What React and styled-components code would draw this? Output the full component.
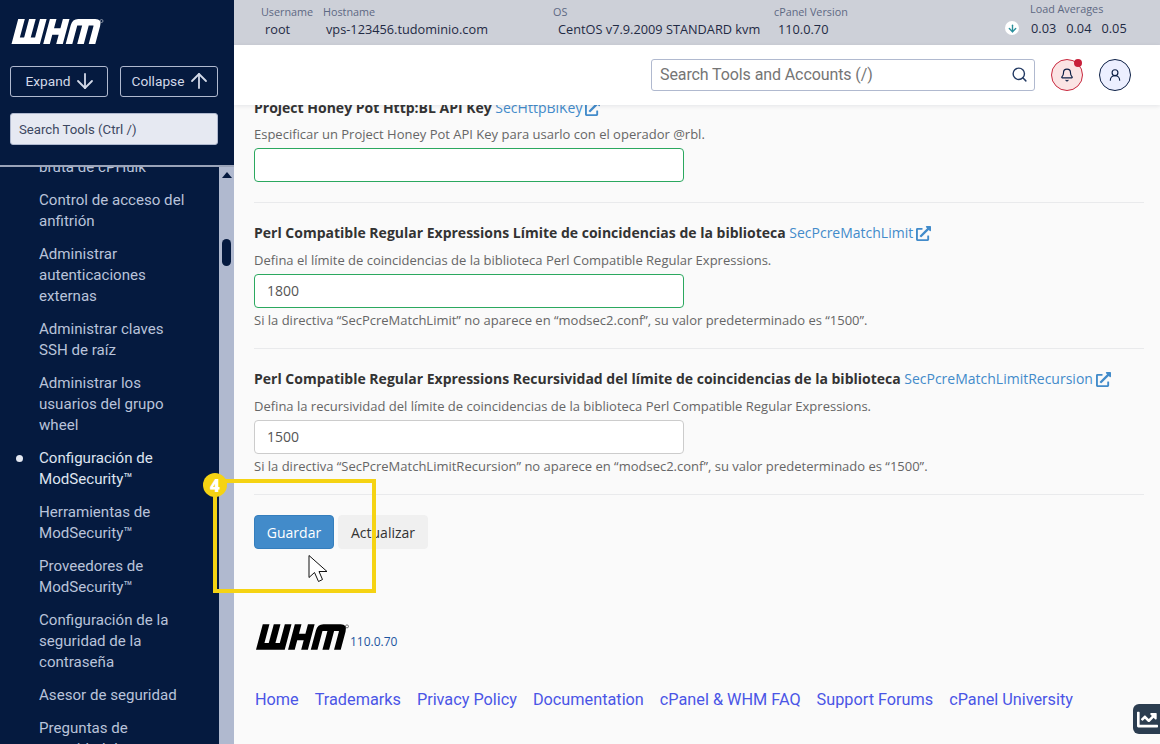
import React from "react";
import styled, { createGlobalStyle } from "styled-components";
import { ArrowDown, ArrowUp, Search, Bell, UserRound } from "lucide-react";
import { FaExternalLinkAlt, FaChartLine } from "react-icons/fa";

const Global = createGlobalStyle`
  html, body { margin: 0; padding: 0; height: 100%; background: #fafafa; }
  * { box-sizing: border-box; }
  body { font-family: "Open Sans", sans-serif; overflow: hidden; }
`;

const Page = styled.div`
  position: relative;
  display: flex;
  width: 1160px;
  height: 744px;
  overflow: hidden;
  background: #fafafa;
`;

const Sidebar = styled.aside`
  width: 234px;
  height: 744px;
  flex: none;
  display: flex;
  flex-direction: column;
  background: #051a3f;
`;

const SideHead = styled.div`
  height: 167px;
  flex: none;
  padding: 19px 16px 0 10px;
  border-bottom: 2px solid #9aa3b8;
`;

const LogoSvg = styled.svg`
  display: block;
  width: ${(p) => p.$w}px;
  height: ${(p) => p.$h}px;
  margin-left: ${(p) => p.$ml || 0}px;
  flex: none;
`;

const ButtonRow = styled.div`
  display: flex;
  gap: 12px;
  margin-top: 22px;
`;

const OutlineButton = styled.div`
  width: 98px;
  height: 31px;
  padding-bottom: 1px;
  display: flex;
  align-items: center;
  justify-content: center;
  gap: 3px;
  border: 1px solid #b0b9cf;
  border-radius: 3px;
  color: #d3d9e8;
  font-family: Roboto, sans-serif;
  font-size: 13.7px;
  & svg { margin-right: -5px; }
`;

const SideSearch = styled.div`
  height: 32px;
  margin-top: 16px;
  padding: 0 8px;
  display: flex;
  align-items: center;
  background: #e6e9f2;
  border: 1px solid #b0b9cf;
  border-radius: 3px;
  color: #3c4761;
  font-family: Roboto, sans-serif;
  font-size: 13.2px;
`;

const SideBody = styled.div`
  flex: 1;
  min-height: 0;
  display: flex;
`;

const NavList = styled.nav`
  width: 219px;
  flex: none;
  overflow: hidden;
  display: flex;
  flex-direction: column;
  gap: 12px;
`;

const NavRow = styled.div`
  display: flex;
  flex: none;
  margin-top: ${(p) => p.$mt || 0}px;
  padding-right: 30px;
  font-family: Roboto, sans-serif;
  font-size: 15.1px;
  line-height: 21px;
  color: ${(p) => (p.$active ? "#dfe4f0" : "#b9c3da")};
`;

const Marker = styled.span`
  width: 39px;
  height: 21px;
  flex: none;
  display: flex;
  align-items: center;
  padding-left: 16px;
  &::after {
    content: "";
    display: ${(p) => (p.$active ? "block" : "none")};
    width: 7px;
    height: 7px;
    border-radius: 50%;
    background: #e4e8f2;
  }
`;

const ScrollTrack = styled.div`
  width: 15px;
  flex: none;
  display: flex;
  flex-direction: column;
  align-items: center;
  background: #b0b9cf;
`;

const ScrollArrow = styled.span`
  width: 0;
  height: 0;
  margin-top: 5px;
  border-left: 5px solid transparent;
  border-right: 5px solid transparent;
  border-bottom: 6px solid #051a3f;
`;

const ScrollThumb = styled.span`
  width: 9px;
  height: 27px;
  margin-top: 61px;
  border-radius: 5px;
  background: #051a3f;
`;

const Main = styled.main`
  flex: 1;
  min-width: 0;
  display: flex;
  flex-direction: column;
`;

const TopBar = styled.div`
  height: 45px;
  flex: none;
  padding-left: 27px;
  display: grid;
  grid-template-columns: 62px 230px 221px 231px 1fr;
  background: #cdd0d8;
`;

const Info = styled.div`
  padding-top: 4px;
`;

const InfoLabel = styled.div`
  font-size: 10.8px;
  line-height: 15px;
  color: #5d6883;
`;

const InfoValue = styled.div`
  margin-top: 1px;
  padding-left: ${(p) => p.$pl}px;
  font-size: 12.75px;
  line-height: 18px;
  white-space: nowrap;
  color: #1f2a44;
`;

const LoadBox = styled.div`
  padding-top: 1px;
`;

const LoadLabel = styled(InfoLabel)`
  margin-left: 25px;
`;

const LoadValues = styled.div`
  margin-top: 3px;
  display: flex;
  align-items: center;
  gap: 10px;
  font-size: 12.75px;
  line-height: 18px;
  color: #1f2a44;
`;

const LoadIcon = styled.span`
  width: 14px;
  height: 14px;
  margin-right: 2px;
  display: flex;
  align-items: center;
  justify-content: center;
  border-radius: 50%;
  background: #fff;
  color: #2a8f9c;
`;

const Header = styled.header`
  position: relative;
  z-index: 2;
  height: 60px;
  flex: none;
  padding: 14px 29px 0 0;
  display: flex;
  justify-content: flex-end;
  gap: 16px;
  background: #fff;
  box-shadow: 0 1px 4px rgba(30, 40, 70, 0.1);
`;

const HeaderSearch = styled.div`
  width: 384px;
  height: 32px;
  padding: 0 6px 1px 8px;
  display: flex;
  align-items: center;
  justify-content: space-between;
  border: 1px solid #b0b9cf;
  border-radius: 3px;
  font-family: Roboto, sans-serif;
  font-size: 16px;
  letter-spacing: -0.1px;
  color: #757575;
  & svg { color: #233a63; }
`;

const RoundButton = styled.div`
  position: relative;
  width: 32px;
  height: 32px;
  display: flex;
  align-items: center;
  justify-content: center;
  border-radius: 50%;
  border: 1px solid ${(p) => p.$line};
  background: ${(p) => p.$bg};
  color: #0c1f45;
`;

const Dot = styled.span`
  position: absolute;
  top: -1px;
  right: 0;
  width: 8px;
  height: 8px;
  border-radius: 50%;
  background: #c8203a;
`;

const Content = styled.div`
  flex: 1;
  min-height: 0;
  overflow: hidden;
  padding: 0 16px 0 20px;
`;

const Form = styled.div`
  margin-top: -8px;
`;

const Section = styled.section`
  padding: ${(p) => p.$pt}px 0 ${(p) => p.$pb}px;
  border-bottom: 1px solid #e9eaec;
`;

const FieldTitle = styled.div`
  height: 20px;
  padding-top: ${(p) => (p.$first ? 2 : 0)}px;
  display: flex;
  align-items: center;
  gap: 3.5px;
  font-size: 14px;
  line-height: 20px;
  font-weight: 700;
  color: #333;
  white-space: nowrap;
`;

const DocLink = styled.span`
  display: inline-flex;
  align-items: center;
  gap: 3px;
  font-weight: 400;
  color: #428bca;
`;

const Description = styled.div`
  margin-top: 8px;
  font-size: 13px;
  line-height: 18px;
  color: #666;
`;

const TextField = styled.div`
  width: 430px;
  height: 34px;
  margin-top: 5px;
  padding: 0 12px 2px;
  display: flex;
  align-items: center;
  background: #fff;
  border: 1px solid ${(p) => (p.$ok ? "#2ba85f" : "#ccc")};
  border-radius: 4px;
  font-size: 14px;
  color: #555;
`;

const HelpText = styled.div`
  margin-top: 3px;
  font-size: 13px;
  line-height: 18px;
  color: #666;
`;

const Actions = styled.div`
  display: flex;
  gap: 4px;
  margin-top: 20px;
`;

const ActionButton = styled.div`
  height: 34px;
  width: ${(p) => p.$w}px;
  display: flex;
  align-items: center;
  justify-content: center;
  border-radius: 4px;
  font-size: 14px;
  border: 1px solid ${(p) => (p.$primary ? "#357ebd" : "#f0f0f0")};
  background: ${(p) => (p.$primary ? "#428bca" : "#f0f0f0")};
  color: ${(p) => (p.$primary ? "#fff" : "#333")};
`;

const FootBrand = styled.div`
  margin-top: 75px;
  padding-left: 2px;
  display: flex;
  align-items: flex-end;
  gap: 1px;
  height: 26px;
`;

const FootVersion = styled.span`
  font-size: 12px;
  line-height: 17px;
  color: #1c55a0;
`;

const FootLinks = styled.div`
  margin-top: 38px;
  padding-left: 1px;
  display: flex;
  gap: 16px;
  font-family: Roboto, sans-serif;
  font-size: 16.25px;
  line-height: 24px;
  color: #4a55e6;
  white-space: nowrap;
`;

const Callout = styled.div`
  position: absolute;
  left: 213px;
  top: 479px;
  width: 163px;
  height: 114px;
  border: 4px solid #f5d313;
  pointer-events: none;
`;

const CalloutBadge = styled.span`
  position: absolute;
  left: -14px;
  top: -10px;
  width: 24px;
  height: 24px;
  display: flex;
  align-items: center;
  justify-content: center;
  border-radius: 50%;
  background: #f5d313;
  color: #fff;
  font-family: "Open Sans", sans-serif;
  font-size: 17px;
  font-weight: 800;
`;

const Pointer = styled.svg`
  position: absolute;
  left: 307px;
  top: 554px;
  width: 22px;
  height: 30px;
`;

const ChartTab = styled.div`
  position: absolute;
  right: 0;
  top: 704px;
  width: 27px;
  height: 30px;
  padding-left: 4px;
  display: flex;
  align-items: center;
  background: #2b3d50;
  border-radius: 6px 0 0 6px;
  color: #fff;
`;

function WhmLogo({ color, w, h, ml }) {
  return (
    <LogoSvg $w={w} $h={h} $ml={ml} viewBox="0 0 92 25">
      <g transform="translate(6.7 0) skewX(-15)" fill="none" stroke={color} strokeWidth="6.6">
        <path d="M3.3 0V21.7H25.1V0" strokeLinejoin="miter" />
        <path d="M14.2 0V22" />
        <path d="M35 0V25M48 0V25M35 12.5H48" />
        <path d="M57.5 25V6Q57.5 3.3 60 3.3H77Q80.5 3.3 80.5 7V25M69 3.3V25" />
      </g>
      <circle cx="90" cy="2" r="1.5" fill="none" stroke={color} strokeWidth="0.6" opacity="0.8" />
    </LogoSvg>
  );
}

const navItems = [
  ["bruta de cPHulk"],
  ["Control de acceso del anfitrión"],
  ["Administrar autenticaciones externas"],
  ["Administrar claves SSH de raíz"],
  ["Administrar los usuarios del grupo wheel"],
  ["Configuración de ModSecurity™", true],
  ["Herramientas de ModSecurity™"],
  ["Proveedores de ModSecurity™"],
  ["Configuración de la seguridad de la contraseña"],
  ["Asesor de seguridad"],
  ["Preguntas de seguridad de"],
];

const footerLinks = [
  "Home",
  "Trademarks",
  "Privacy Policy",
  "Documentation",
  "cPanel & WHM FAQ",
  "Support Forums",
  "cPanel University",
];

const Title = ({ text, link, first }) => (
  <FieldTitle $first={first}>
    {text}
    <DocLink>
      {link}
      <FaExternalLinkAlt size={15} />
    </DocLink>
  </FieldTitle>
);

export default function App() {
  return (
    <Page>
      <Global />
      <Sidebar>
        <SideHead>
          <WhmLogo color="#fff" w={93} h={25} ml={1} />
          <ButtonRow>
            <OutlineButton>
              Expand <ArrowDown size={24} strokeWidth={1.8} />
            </OutlineButton>
            <OutlineButton>
              Collapse <ArrowUp size={24} strokeWidth={1.8} />
            </OutlineButton>
          </ButtonRow>
          <SideSearch>Search Tools (Ctrl /)</SideSearch>
        </SideHead>
        <SideBody>
          <NavList>
            {navItems.map(([label, active], i) => (
              <NavRow key={label} $active={active} $mt={i === 0 ? -10 : 0}>
                <Marker $active={active} />
                <span>{label}</span>
              </NavRow>
            ))}
          </NavList>
          <ScrollTrack>
            <ScrollArrow />
            <ScrollThumb />
          </ScrollTrack>
        </SideBody>
      </Sidebar>
      <Main>
        <TopBar>
          <Info>
            <InfoLabel>Username</InfoLabel>
            <InfoValue $pl={4}>root</InfoValue>
          </Info>
          <Info>
            <InfoLabel>Hostname</InfoLabel>
            <InfoValue $pl={3}>vps-123456.tudominio.com</InfoValue>
          </Info>
          <Info>
            <InfoLabel>OS</InfoLabel>
            <InfoValue $pl={5}>CentOS v7.9.2009 STANDARD kvm</InfoValue>
          </Info>
          <Info>
            <InfoLabel>cPanel Version</InfoLabel>
            <InfoValue $pl={4}>110.0.70</InfoValue>
          </Info>
          <LoadBox>
            <LoadLabel>Load Averages</LoadLabel>
            <LoadValues>
              <LoadIcon>
                <ArrowDown size={11} strokeWidth={3} />
              </LoadIcon>
              <span>0.03</span>
              <span>0.04</span>
              <span>0.05</span>
            </LoadValues>
          </LoadBox>
        </TopBar>
        <Header>
          <HeaderSearch>
            Search Tools and Accounts (/)
            <Search size={17} />
          </HeaderSearch>
          <RoundButton $line="#c8283e" $bg="#fbe4e4">
            <Bell size={14} />
            <Dot />
          </RoundButton>
          <RoundButton $line="#0c1f45" $bg="#ecefff">
            <UserRound size={14} />
          </RoundButton>
        </Header>
        <Content>
          <Form>
            <Section $pt={0} $pb={20}>
              <Title first text="Project Honey Pot Http:BL API Key" link="SecHttpBlKey" />
              <Description>Especificar un Project Honey Pot API Key para usarlo con el operador @rbl.</Description>
              <TextField $ok />
            </Section>
            <Section $pt={20} $pb={19}>
              <Title
                text="Perl Compatible Regular Expressions Límite de coincidencias de la biblioteca"
                link="SecPcreMatchLimit"
              />
              <Description>Defina el límite de coincidencias de la biblioteca Perl Compatible Regular Expressions.</Description>
              <TextField $ok>1800</TextField>
              <HelpText>Si la directiva “SecPcreMatchLimit” no aparece en “modsec2.conf”, su valor predeterminado es “1500”.</HelpText>
            </Section>
            <Section $pt={20} $pb={19}>
              <Title
                text="Perl Compatible Regular Expressions Recursividad del límite de coincidencias de la biblioteca"
                link="SecPcreMatchLimitRecursion"
              />
              <Description>Defina la recursividad del límite de coincidencias de la biblioteca Perl Compatible Regular Expressions.</Description>
              <TextField>1500</TextField>
              <HelpText>Si la directiva “SecPcreMatchLimitRecursion” no aparece en “modsec2.conf”, su valor predeterminado es “1500”.</HelpText>
            </Section>
            <Actions>
              <ActionButton $primary $w={80}>Guardar</ActionButton>
              <ActionButton $w={90}>Actualizar</ActionButton>
            </Actions>
            <FootBrand>
              <WhmLogo color="#000" w={93} h={26} />
              <FootVersion>110.0.70</FootVersion>
            </FootBrand>
            <FootLinks>
              {footerLinks.map((l) => (
                <span key={l}>{l}</span>
              ))}
            </FootLinks>
          </Form>
        </Content>
      </Main>
      <Callout>
        <CalloutBadge>4</CalloutBadge>
      </Callout>
      <Pointer viewBox="0 0 22 30">
        <path
          d="M2 1.5V23.5L7.5 18.5L11.5 27.5L15.5 25.5L12 17.5H20Z"
          fill="#fff"
          stroke="#111"
          strokeWidth="1"
          strokeLinejoin="miter"
        />
      </Pointer>
      <ChartTab>
        <FaChartLine size={21} />
      </ChartTab>
    </Page>
  );
}
